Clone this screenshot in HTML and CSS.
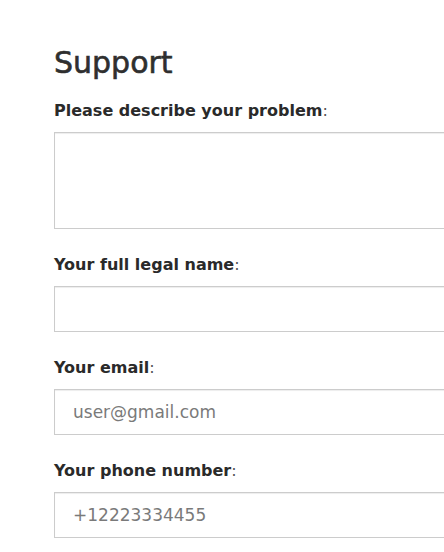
FILE: index.html
```html
<!DOCTYPE html>
<html lang="en">
<head>
<meta charset="utf-8">
<title>Support</title>
<link rel="stylesheet" href="styles.css">
</head>
<body>
<main class="page">
  <h1 class="title">Support</h1>
  <form class="form">
    <div class="group">
      <label class="label" for="problem">Please describe your problem<span class="colon">:</span></label>
      <textarea id="problem" class="field field-area"></textarea>
    </div>
    <div class="group">
      <label class="label" for="name">Your full legal name<span class="colon">:</span></label>
      <input id="name" class="field" type="text">
    </div>
    <div class="group">
      <label class="label" for="email">Your email<span class="colon">:</span></label>
      <input id="email" class="field" type="email" placeholder="user@gmail.com">
    </div>
    <div class="group">
      <label class="label" for="phone">Your phone number<span class="colon">:</span></label>
      <input id="phone" class="field" type="tel" placeholder="+12223334455">
    </div>
  </form>
</main>
</body>
</html>
```

FILE: styles.css
```css
html, body {
  margin: 0;
  padding: 0;
  background: #fff;
  overflow: hidden;
}

.page {
  font-family: "DejaVu Sans", Verdana, sans-serif;
  color: #333;
  padding: 45px 0 0 54px;
  overflow: hidden;
  height: 552px;
  box-sizing: border-box;
}

.title {
  margin: 0 0 20px 0;
  font-size: 30px;
  line-height: 36px;
  font-weight: normal;
  color: #2f2f2f;
  -webkit-text-stroke: 0.6px #2f2f2f;
}

.form {
  display: flex;
  flex-direction: column;
  gap: 26px;
}

.group {
  display: flex;
  flex-direction: column;
  gap: 11px;
}

.label {
  display: block;
  font-size: 16px;
  line-height: 20px;
  font-weight: bold;
  color: #2a2a2a;
}

.colon {
  font-weight: normal;
  color: #555;
}

.field {
  display: block;
  width: 460px;
  height: 46px;
  box-sizing: border-box;
  margin: 0;
  padding: 10px 18px;
  border: 1px solid #ccc;
  border-radius: 0;
  box-shadow: inset 0 1px 1px rgba(0, 0, 0, 0.075);
  background: #fff;
  font-family: "DejaVu Sans", Verdana, sans-serif;
  font-size: 17px;
  line-height: 24px;
  color: #555;
  outline: none;
}

.field-area {
  height: 97px;
  resize: none;
}

.field::placeholder {
  color: #7a7a7a;
  opacity: 1;
}
```
